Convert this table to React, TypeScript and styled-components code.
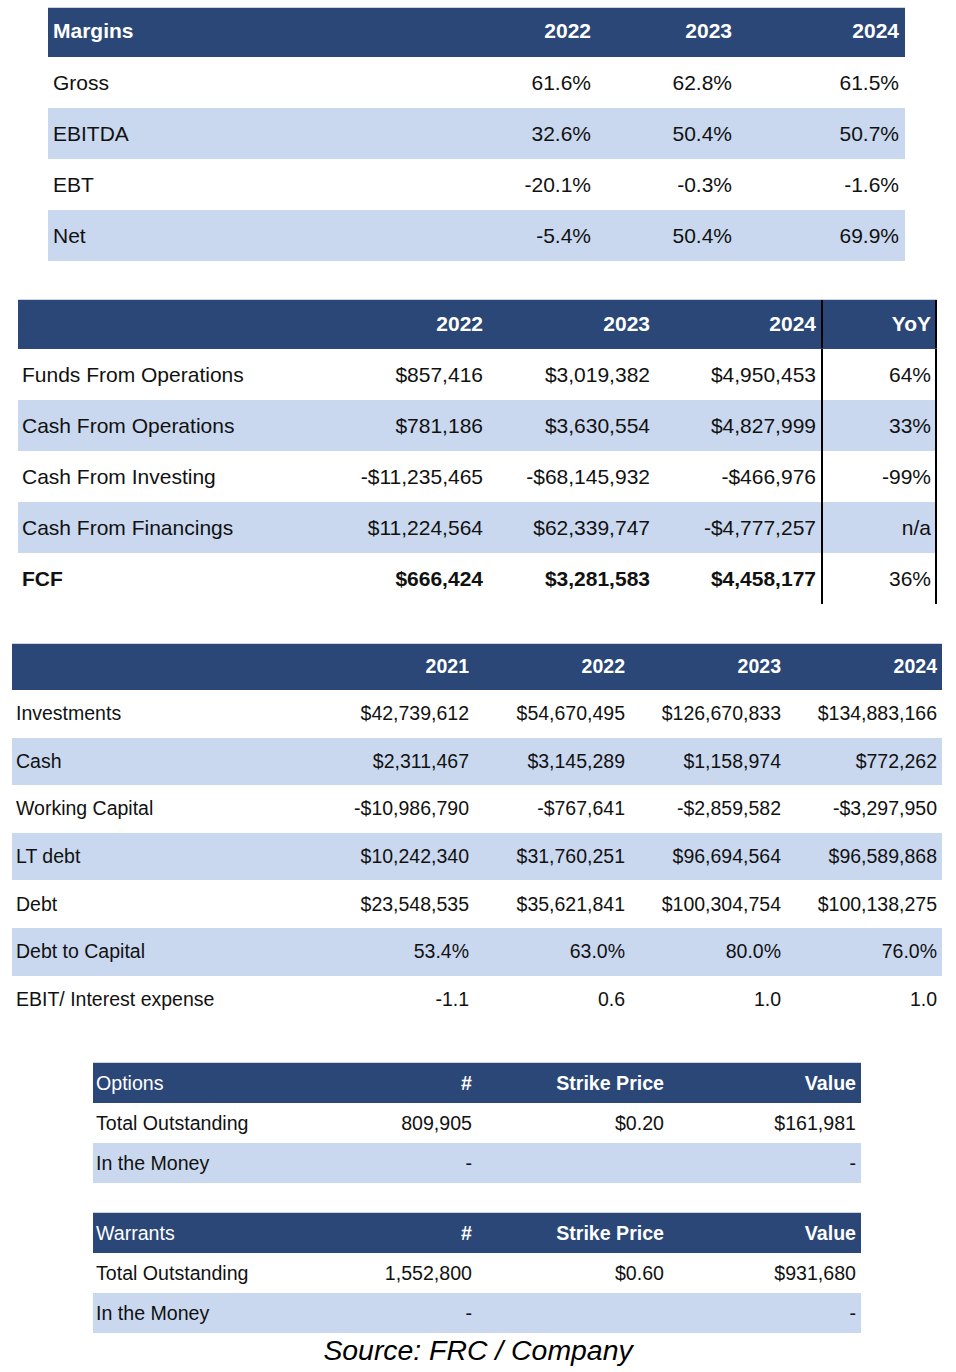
import React from "react";
import styled, { createGlobalStyle } from "styled-components";

const GlobalStyle = createGlobalStyle`
  html, body { margin: 0; padding: 0; background: #ffffff; }
  body { font-family: "Liberation Sans", Arial, sans-serif; color: #111111; }
`;

const NAVY = "#2a4777";
const BAND = "#c9d8ef";

const Page = styled.div`
  display: flex;
  flex-direction: column;
  width: 956px;
  padding-top: 8px;
`;

const Table = styled.div<{ $cols: string; $left: number; $width: number; $size: number; $mt: number }>`
  --cols: ${(p) => p.$cols};
  display: flex;
  flex-direction: column;
  margin-left: ${(p) => p.$left}px;
  margin-top: ${(p) => p.$mt}px;
  width: ${(p) => p.$width}px;
  font-size: ${(p) => p.$size}px;
`;

const Row = styled.div<{ $h: number; $kind: "head" | "band" | "plain"; $lift?: number }>`
  display: grid;
  grid-template-columns: var(--cols);
  height: ${(p) => p.$h}px;
  box-sizing: border-box;
  padding-bottom: ${(p) => p.$lift ?? 0}px;
  align-items: stretch;
  background: ${(p) => (p.$kind === "head" ? NAVY : p.$kind === "band" ? BAND : "#ffffff")};
  color: ${(p) => (p.$kind === "head" ? "#ffffff" : "#111111")};
  font-weight: ${(p) => (p.$kind === "head" ? 700 : 400)};
  box-shadow: ${(p) => (p.$kind === "head" ? "0 -1px 0 #ccd4e2" : "none")};
`;

const Cell = styled.div<{ $right?: boolean; $bold?: boolean; $light?: boolean; $ruled?: boolean; $pl?: number; $pr?: number }>`
  display: flex;
  align-items: center;
  justify-content: ${(p) => (p.$right ? "flex-end" : "flex-start")};
  padding-left: ${(p) => p.$pl ?? 4}px;
  padding-right: ${(p) => p.$pr ?? 6}px;
  white-space: nowrap;
  font-weight: ${(p) => (p.$bold ? 700 : p.$light ? 400 : "inherit")};
  border-left: ${(p) => (p.$ruled ? "2px solid #000" : "none")};
  border-right: ${(p) => (p.$ruled ? "2px solid #000" : "none")};
  box-sizing: border-box;
`;

const Source = styled.p`
  margin: 1px 0 0;
  font-size: 28.4px;
  line-height: 32px;
  font-style: italic;
  text-align: center;
  color: #000;
`;

type Line = { label: string; values: string[]; bold?: boolean };

const margins: Line[] = [
  { label: "Gross", values: ["61.6%", "62.8%", "61.5%"] },
  { label: "EBITDA", values: ["32.6%", "50.4%", "50.7%"] },
  { label: "EBT", values: ["-20.1%", "-0.3%", "-1.6%"] },
  { label: "Net", values: ["-5.4%", "50.4%", "69.9%"] },
];

const cashflow: Line[] = [
  { label: "Funds From Operations", values: ["$857,416", "$3,019,382", "$4,950,453", "64%"] },
  { label: "Cash From Operations", values: ["$781,186", "$3,630,554", "$4,827,999", "33%"] },
  { label: "Cash From Investing", values: ["-$11,235,465", "-$68,145,932", "-$466,976", "-99%"] },
  { label: "Cash From Financings", values: ["$11,224,564", "$62,339,747", "-$4,777,257", "n/a"] },
  { label: "FCF", values: ["$666,424", "$3,281,583", "$4,458,177", "36%"], bold: true },
];

const balance: Line[] = [
  { label: "Investments", values: ["$42,739,612", "$54,670,495", "$126,670,833", "$134,883,166"] },
  { label: "Cash", values: ["$2,311,467", "$3,145,289", "$1,158,974", "$772,262"] },
  { label: "Working Capital", values: ["-$10,986,790", "-$767,641", "-$2,859,582", "-$3,297,950"] },
  { label: "LT debt", values: ["$10,242,340", "$31,760,251", "$96,694,564", "$96,589,868"] },
  { label: "Debt", values: ["$23,548,535", "$35,621,841", "$100,304,754", "$100,138,275"] },
  { label: "Debt to Capital", values: ["53.4%", "63.0%", "80.0%", "76.0%"] },
  { label: "EBIT/ Interest expense", values: ["-1.1", "0.6", "1.0", "1.0"] },
];

const kindFor = (i: number): "band" | "plain" => (i % 2 === 1 ? "band" : "plain");

function MarginsTable() {
  return (
    <Table $cols="432px 117px 141px 167px" $left={48} $width={857} $size={21} $mt={0}>
      <Row $h={49} $kind="head" $lift={3}>
        <Cell $pl={5}>Margins</Cell>
        <Cell $right>2022</Cell>
        <Cell $right>2023</Cell>
        <Cell $right>2024</Cell>
      </Row>
      {margins.map((m, i) => (
        <Row key={m.label} $h={51} $kind={kindFor(i)}>
          <Cell $pl={5}>{m.label}</Cell>
          {m.values.map((v, j) => (
            <Cell key={j} $right>{v}</Cell>
          ))}
        </Row>
      ))}
    </Table>
  );
}

function CashFlowTable() {
  return (
    <Table $cols="305px 165px 167px 166px 116px" $left={18} $width={919} $size={21} $mt={39}>
      <Row $h={49} $kind="head" $lift={1}>
        <Cell />
        <Cell $right $pr={5}>2022</Cell>
        <Cell $right $pr={5}>2023</Cell>
        <Cell $right $pr={5}>2024</Cell>
        <Cell $right $ruled $pr={4}>YoY</Cell>
      </Row>
      {cashflow.map((c, i) => (
        <Row key={c.label} $h={51} $kind={kindFor(i)}>
          <Cell $bold={c.bold}>{c.label}</Cell>
          {c.values.slice(0, 3).map((v, j) => (
            <Cell key={j} $right $pr={5} $bold={c.bold}>{v}</Cell>
          ))}
          <Cell $right $ruled $pr={4}>{c.values[3]}</Cell>
        </Row>
      ))}
    </Table>
  );
}

function BalanceTable() {
  return (
    <Table $cols="306px 156px 156px 156px 156px" $left={12} $width={930} $size={19.5} $mt={40}>
      <Row $h={46} $kind="head" $lift={1}>
        <Cell />
        <Cell $right $pr={5}>2021</Cell>
        <Cell $right $pr={5}>2022</Cell>
        <Cell $right $pr={5}>2023</Cell>
        <Cell $right $pr={5}>2024</Cell>
      </Row>
      {balance.map((b, i) => (
        <Row key={b.label} $h={47.6} $kind={kindFor(i)}>
          <Cell>{b.label}</Cell>
          {b.values.map((v, j) => (
            <Cell key={j} $right $pr={5}>{v}</Cell>
          ))}
        </Row>
      ))}
    </Table>
  );
}

function InstrumentTable({ title, count, strike, value, mt }: { title: string; count: string; strike: string; value: string; mt: number }) {
  return (
    <Table $cols="192px 192px 192px 192px" $left={93} $width={768} $size={19.6} $mt={mt}>
      <Row $h={40} $kind="head">
        <Cell $pl={3} $light>{title}</Cell>
        <Cell $right $pr={5}>#</Cell>
        <Cell $right $pr={5}>Strike Price</Cell>
        <Cell $right $pr={5}>Value</Cell>
      </Row>
      <Row $h={40} $kind="plain">
        <Cell $pl={3}>Total Outstanding</Cell>
        <Cell $right $pr={5}>{count}</Cell>
        <Cell $right $pr={5}>{strike}</Cell>
        <Cell $right $pr={5}>{value}</Cell>
      </Row>
      <Row $h={40} $kind="band">
        <Cell $pl={3}>In the Money</Cell>
        <Cell $right $pr={5}>-</Cell>
        <Cell $right $pr={5}></Cell>
        <Cell $right $pr={5}>-</Cell>
      </Row>
    </Table>
  );
}

export default function App() {
  return (
    <>
      <GlobalStyle />
      <Page>
        <MarginsTable />
        <CashFlowTable />
        <BalanceTable />
        <InstrumentTable title="Options" count="809,905" strike="$0.20" value="$161,981" mt={40} />
        <InstrumentTable title="Warrants" count="1,552,800" strike="$0.60" value="$931,680" mt={30} />
        <Source>Source: FRC / Company</Source>
      </Page>
    </>
  );
}
